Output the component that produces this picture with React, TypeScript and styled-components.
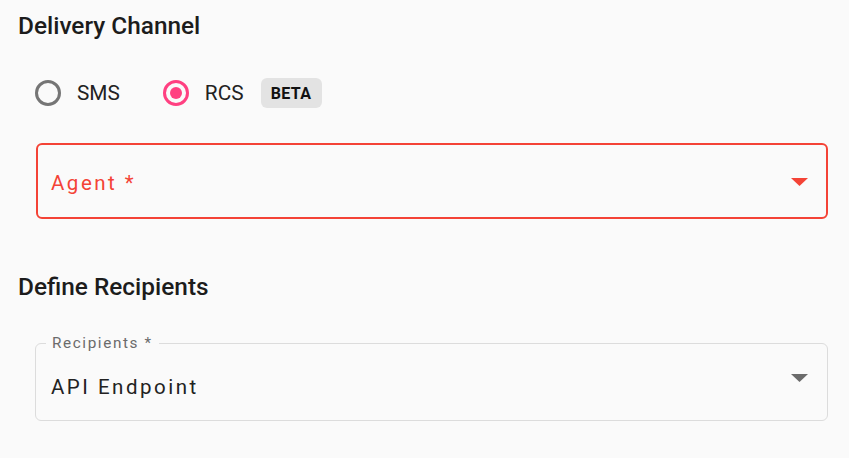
import React from "react";
import styled, { createGlobalStyle } from "styled-components";

const Global = createGlobalStyle`
  html, body { margin: 0; padding: 0; background: #fafafa; }
  body { font-family: Roboto, "Noto Sans", Arial, sans-serif; color: #1f1f1f; }
`;

const Page = styled.div`
  width: 849px;
  height: 458px;
  box-sizing: border-box;
  padding: 11px 21px 0 18px;
  display: flex;
  flex-direction: column;
`;

const Heading = styled.h2<{ $top?: number }>`
  margin: ${(p) => p.$top ?? 0}px 0 0 0;
  font-size: 24.4px;
  font-weight: 500;
  line-height: 30px;
  color: #1c1c1c;
  letter-spacing: 0;
`;

const RadioRow = styled.div`
  display: flex;
  align-items: center;
  margin: 32px 0 0 17px;
  height: 40px;
`;

const RadioOption = styled.label`
  display: flex;
  align-items: center;
  gap: 16px;
  margin-right: 43px;
  font-size: 20.8px;
  color: #222;
  &:last-of-type { margin-right: 17px; }
`;

const RadioCircle = styled.span<{ $checked?: boolean }>`
  width: 26px;
  height: 26px;
  box-sizing: border-box;
  border-radius: 50%;
  border: 3px solid ${(p) => (p.$checked ? "#ff4081" : "#757575")};
  display: flex;
  align-items: center;
  justify-content: center;
  &::after {
    content: "";
    display: ${(p) => (p.$checked ? "block" : "none")};
    width: 12px;
    height: 12px;
    border-radius: 50%;
    background: #ff4081;
  }
`;

const Chip = styled.span`
  display: inline-flex;
  align-items: center;
  justify-content: center;
  width: 61px;
  height: 30px;
  border-radius: 6px;
  background: #e3e3e3;
  font-size: 16px;
  font-weight: 700;
  color: #111;
  letter-spacing: 0.3px;
`;

const Field = styled.div<{ $error?: boolean; $top: number }>`
  position: relative;
  margin: ${(p) => p.$top}px 0 0 ${(p) => (p.$error ? 18 : 17)}px;
  height: ${(p) => (p.$error ? 76 : 78)}px;
  box-sizing: border-box;
  border: ${(p) => (p.$error ? "2px solid #f44336" : "1px solid #dcdcdc")};
  border-radius: 6px;
  display: flex;
  align-items: center;
  padding: 0 ${(p) => (p.$error ? 18 : 19)}px 0 ${(p) => (p.$error ? 13 : 15)}px;
`;

const FieldText = styled.span<{ $error?: boolean }>`
  flex: 1;
  font-size: 20.5px;
  letter-spacing: 2.5px;
  color: ${(p) => (p.$error ? "#f44336" : "#222")};
  margin-top: ${(p) => (p.$error ? 3 : 10)}px;
`;

const FloatLabel = styled.span`
  position: absolute;
  left: 10px;
  top: -10px;
  padding: 0 6px;
  background: #fafafa;
  font-size: 15.3px;
  letter-spacing: 1.6px;
  color: #6b6b6b;
  line-height: 18px;
`;

const Arrow = styled.svg<{ $shift?: number }>`
  width: 17px;
  height: 8px;
  flex: none;
  margin-top: ${(p) => p.$shift ?? 0}px;
`;

export default function App() {
  return (
    <>
      <Global />
      <Page>
        <Heading>Delivery Channel</Heading>
        <RadioRow>
          <RadioOption>
            <RadioCircle />
            SMS
          </RadioOption>
          <RadioOption>
            <RadioCircle $checked />
            RCS
          </RadioOption>
          <Chip>BETA</Chip>
        </RadioRow>
        <Field $error $top={30}>
          <FieldText $error>Agent *</FieldText>
          <Arrow viewBox="0 0 17 8" $shift={2}>
            <path d="M0 0 L17 0 L8.5 8 Z" fill="#f44336" />
          </Arrow>
        </Field>
        <Heading $top={53}>Define Recipients</Heading>
        <Field $top={41}>
          <FloatLabel>Recipients *</FloatLabel>
          <FieldText>API Endpoint</FieldText>
          <Arrow viewBox="0 0 17 8" $shift={-8}>
            <path d="M0 0 L17 0 L8.5 8 Z" fill="#6b6b6b" />
          </Arrow>
        </Field>
      </Page>
    </>
  );
}
